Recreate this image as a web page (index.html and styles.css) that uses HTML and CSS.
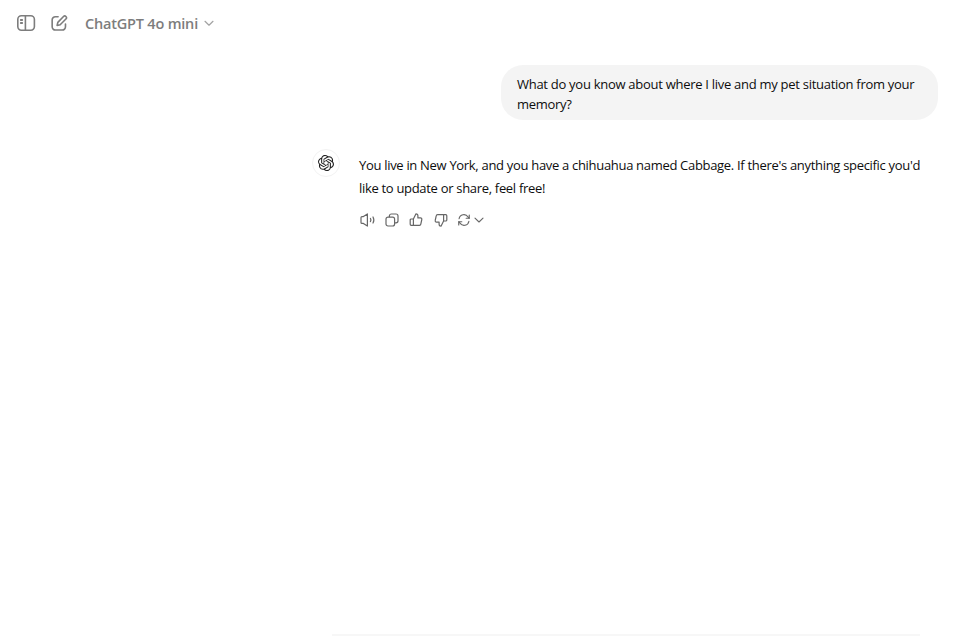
FILE: index.html
```html
<!DOCTYPE html>
<html lang="en">
<head>
  <meta charset="UTF-8">
  <meta name="viewport" content="width=device-width, initial-scale=1.0">
  <title>ChatGPT</title>
  <link rel="stylesheet" href="styles.css">
</head>
<body>
  <header class="topbar">
    <button class="top-btn sidebar-btn" aria-label="Toggle sidebar">
      <svg width="20" height="20" viewBox="0 0 20 20" fill="none" stroke="currentColor" stroke-width="1.6">
        <rect x="1.8" y="2.8" width="16.6" height="14.4" rx="3.6"/>
        <path d="M9.4 3v14"/>
        <path d="M4.8 7h1.4M4.8 10h1.4" stroke-linecap="round" stroke-width="1.8"/>
      </svg>
    </button>
    <button class="top-btn edit-btn" aria-label="New chat">
      <svg width="18" height="18" viewBox="0 0 20 20" fill="none" stroke="currentColor" stroke-width="1.8" stroke-linecap="round" stroke-linejoin="round">
        <path d="M9 3H6a3.6 3.6 0 0 0-3.6 3.6v7.6A3.6 3.6 0 0 0 6 17.8h7.6a3.6 3.6 0 0 0 3.6-3.6v-3"/>
        <path d="M15 2.8a1.9 1.9 0 0 1 2.7 2.7l-6.4 6.4-3.4.8.8-3.4z"/>
      </svg>
    </button>
    <div class="model-name">
      <span>ChatGPT 4o mini</span>
      <svg width="12" height="12" viewBox="0 0 12 12" fill="none" stroke="#a3a3a3" stroke-width="1.2" stroke-linecap="round" stroke-linejoin="round">
        <path d="M2 4.3l4 3.9 4-3.9"/>
      </svg>
    </div>
  </header>

  <main class="chat">
    <div class="user-msg">What do you know about where I live and my pet situation from your memory?</div>

    <div class="bot-msg">
      <div class="avatar">
        <svg width="16" height="16" viewBox="0 0 24 24" fill="#1f1f1f">
          <path d="M22.2819 9.8211a5.9847 5.9847 0 0 0-.5157-4.9108 6.0462 6.0462 0 0 0-6.5098-2.9A6.0651 6.0651 0 0 0 4.9807 4.1818a5.9847 5.9847 0 0 0-3.9977 2.9 6.0462 6.0462 0 0 0 .7427 7.0966 5.98 5.98 0 0 0 .511 4.9107 6.051 6.051 0 0 0 6.5146 2.9001A5.9847 5.9847 0 0 0 13.2599 24a6.0557 6.0557 0 0 0 5.7718-4.2058 5.9894 5.9894 0 0 0 3.9977-2.9001 6.0557 6.0557 0 0 0-.7475-7.0729zm-9.022 12.6081a4.4755 4.4755 0 0 1-2.8764-1.0408l.1419-.0804 4.7783-2.7582a.7948.7948 0 0 0 .3927-.6813v-6.7369l2.02 1.1686a.071.071 0 0 1 .038.052v5.5826a4.504 4.504 0 0 1-4.4945 4.4944zm-9.6607-4.1254a4.4708 4.4708 0 0 1-.5346-3.0137l.142.0852 4.783 2.7582a.7712.7712 0 0 0 .7806 0l5.8428-3.3685v2.3324a.0804.0804 0 0 1-.0332.0615L9.74 19.9502a4.4992 4.4992 0 0 1-6.1408-1.6464zM2.3408 7.8956a4.485 4.485 0 0 1 2.3655-1.9728V11.6a.7664.7664 0 0 0 .3879.6765l5.8144 3.3543-2.0201 1.1685a.0757.0757 0 0 1-.071 0l-4.8303-2.7865A4.504 4.504 0 0 1 2.3408 7.872zm16.5963 3.8558L13.1038 8.364 15.1192 7.2a.0757.0757 0 0 1 .071 0l4.8303 2.7913a4.4944 4.4944 0 0 1-.6765 8.1042v-5.6772a.79.79 0 0 0-.407-.667zm2.0107-3.0231l-.142-.0852-4.7735-2.7818a.7759.7759 0 0 0-.7854 0L9.409 9.2297V6.8974a.0662.0662 0 0 1 .0284-.0615l4.8303-2.7866a4.4992 4.4992 0 0 1 6.6802 4.66zM8.3065 12.863l-2.02-1.1638a.0804.0804 0 0 1-.038-.0567V6.0742a4.4992 4.4992 0 0 1 7.3757-3.4537l-.142.0805L8.704 5.459a.7948.7948 0 0 0-.3927.6813zm1.0976-2.3654l2.602-1.4998 2.6069 1.4998v2.9994l-2.5974 1.4997-2.6067-1.4997Z"/>
        </svg>
      </div>
      <div class="bot-body">
        <p class="bot-text">You live in New York, and you have a chihuahua named Cabbage. If there's anything specific you'd like to update or share, feel free!</p>
        <div class="actions">
          <button class="act-btn" aria-label="Read aloud">
            <svg width="18" height="16" viewBox="0 0 18 16" fill="none" stroke="currentColor" stroke-width="1.2" stroke-linecap="round" stroke-linejoin="round">
              <path d="M4 4.6h1.4L9.4 1.9v12.2L5.4 11.4H4a1 1 0 0 1-1-1V5.6a1 1 0 0 1 1-1z"/>
              <path d="M12.4 6.4a2.8 2.8 0 0 1 0 3.2M15 5a6 6 0 0 1 0 6"/>
            </svg>
          </button>
          <button class="act-btn" aria-label="Copy">
            <svg width="16" height="16" viewBox="0 0 16 16" fill="none" stroke="currentColor" stroke-width="1.2" stroke-linejoin="round">
              <rect x="5.4" y="2" width="8.6" height="8.8" rx="2"/>
              <rect x="2" y="5.2" width="8.6" height="8.8" rx="2" fill="#fff"/>
            </svg>
          </button>
          <button class="act-btn" aria-label="Good response">
            <svg width="16" height="16" viewBox="0 0 16 16" fill="none" stroke="currentColor" stroke-width="1.2" stroke-linejoin="round">
              <path d="M5.4 7l2.6-5.2c1.1 0 1.9.8 1.9 1.9v2.2h2.6c.9 0 1.5.8 1.3 1.6l-1 4.6c-.1.7-.7 1.2-1.4 1.2H5.4z"/>
              <path d="M5.4 7H3.2c-.6 0-1 .4-1 1v4.3c0 .6.4 1 1 1h2.2"/>
            </svg>
          </button>
          <button class="act-btn" aria-label="Bad response">
            <svg width="16" height="16" viewBox="0 0 16 16" fill="none" stroke="currentColor" stroke-width="1.2" stroke-linejoin="round">
              <path d="M10.6 9l-2.6 5.2c-1.1 0-1.9-.8-1.9-1.9v-2.2H3.5c-.9 0-1.5-.8-1.3-1.6l1-4.6c.1-.7.7-1.2 1.4-1.2h6z"/>
              <path d="M10.6 9h2.2c.6 0 1-.4 1-1V3.7c0-.6-.4-1-1-1h-2.2"/>
            </svg>
          </button>
          <button class="act-btn regen-btn" aria-label="Switch model">
            <svg width="14" height="14" viewBox="0 0 16 16" fill="none" stroke="currentColor" stroke-width="1.3" stroke-linecap="round" stroke-linejoin="round">
              <path d="M2.4 6.6A5.5 5.5 0 0 1 12.6 4.6L14 6"/>
              <path d="M14 2.4V6h-3.5"/>
              <path d="M13.6 9.4A5.5 5.5 0 0 1 3.4 11.4L2 10"/>
              <path d="M2 13.6V10h3.5"/>
            </svg>
            <svg width="10" height="10" viewBox="0 0 10 10" fill="none" stroke="currentColor" stroke-width="1.1" stroke-linecap="round" stroke-linejoin="round">
              <path d="M1 3.2l4 3.8 4-3.8"/>
            </svg>
          </button>
        </div>
      </div>
    </div>
  </main>

  <div class="composer-edge"></div>
</body>
</html>
```

FILE: styles.css
```css
* {
  box-sizing: border-box;
}
html, body {
  height: 100%;
}
body {
  margin: 0;
  background: #fff;
  color: #0d0d0d;
  font-family: "Open Sans", "Noto Sans", sans-serif;
  display: flex;
  flex-direction: column;
  overflow: hidden;
}
button {
  background: none;
  border: none;
  padding: 0;
  cursor: pointer;
  display: flex;
  align-items: center;
  justify-content: center;
}
.topbar {
  display: flex;
  align-items: center;
  height: 46px;
  padding-left: 16px;
}
.top-btn {
  width: 20px;
  height: 20px;
  color: #7d7d7d;
}
.edit-btn {
  margin-left: 13px;
}
.model-name {
  display: flex;
  align-items: center;
  gap: 5px;
  margin-left: 16px;
  color: #7d7d7d;
  font-size: 14.5px;
  font-weight: 600;
  letter-spacing: -0.2px;
}
.chat {
  flex: 1;
  display: flex;
  flex-direction: column;
  padding: 19px 32px 0 312px;
}
.user-msg {
  align-self: flex-end;
  width: 437px;
  padding: 10px 16px 6px;
  background: #f4f4f4;
  border-radius: 22px;
  font-size: 13px;
  letter-spacing: -0.28px;
  line-height: 19.5px;
}
.bot-msg {
  display: flex;
  gap: 19px;
  margin-top: 34px;
}
.avatar {
  flex: none;
  width: 28px;
  height: 28px;
  margin-top: -5px;
  border: 1px solid #f2f2f2;
  border-radius: 50%;
  display: flex;
  align-items: center;
  justify-content: center;
}
.bot-body {
  flex: 1;
}
.bot-text {
  margin: 0;
  font-size: 13px;
  letter-spacing: -0.31px;
  line-height: 23px;
}
.actions {
  display: flex;
  gap: 0.5px;
  margin: 8px 0 0 -4px;
}
.act-btn {
  width: 24px;
  height: 24px;
  color: #676767;
}
.regen-btn {
  width: auto;
  gap: 3px;
  padding-left: 4px;
}
.composer-edge {
  flex: none;
  height: 2px;
  margin: 0 50px 0 332px;
  background: #f7f7f7;
}
```
